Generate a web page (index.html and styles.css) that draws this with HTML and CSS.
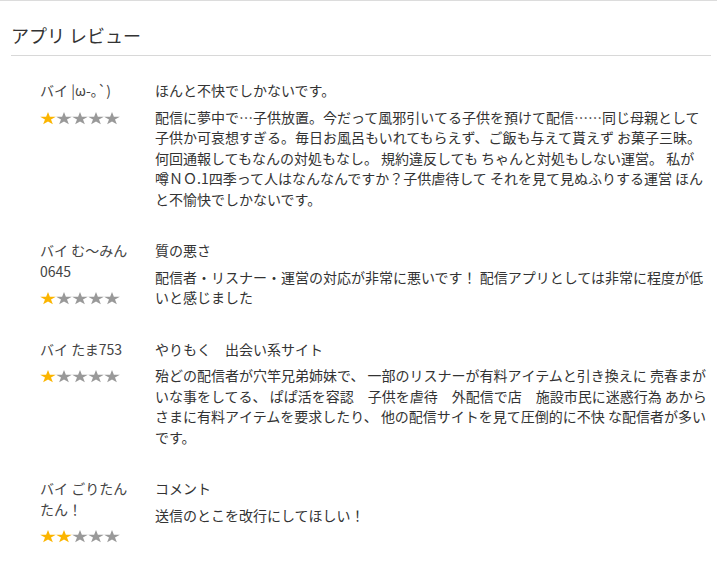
FILE: index.html
```html
<!DOCTYPE html>
<html lang="ja">
<head>
<meta charset="utf-8">
<title>アプリ レビュー</title>
<link rel="stylesheet" href="styles.css">
</head>
<body>
<svg width="0" height="0" class="defs">
  <defs>
    <path id="star" d="M12 0.2L14.79 8.77L23.8 8.8L16.5 14.07L19.3 22.6L12 17.34L4.7 22.6L7.49 14.07L0.2 8.8L9.21 8.77Z"/>
  </defs>
</svg>
<div class="page">
  <header class="page-header">
    <h2 class="page-title">アプリ レビュー</h2>
  </header>
  <div class="reviews">
    <div class="review">
      <div class="author">
        <div class="author-name">バイ |ω-｡`)</div>
        <div class="stars">
          <svg class="star on" viewBox="0 0 24 24" preserveAspectRatio="none"><use href="#star"/></svg>
          <svg class="star" viewBox="0 0 24 24" preserveAspectRatio="none"><use href="#star"/></svg>
          <svg class="star" viewBox="0 0 24 24" preserveAspectRatio="none"><use href="#star"/></svg>
          <svg class="star" viewBox="0 0 24 24" preserveAspectRatio="none"><use href="#star"/></svg>
          <svg class="star" viewBox="0 0 24 24" preserveAspectRatio="none"><use href="#star"/></svg>
        </div>
      </div>
      <div class="content">
        <div class="title">ほんと不快でしかないです。</div>
        <p class="body">配信に夢中で…子供放置。今だって風邪引いてる子供を預けて配信……同じ母親として子供か可哀想すぎる。毎日お風呂もいれてもらえず、ご飯も与えて貰えず お菓子三昧。何回通報してもなんの対処もなし。 規約違反しても ちゃんと対処もしない運営。 私が<span class="nowrap">噂ＮＯ.1四季</span>って人はなんなんですか？子供虐待して それを見て見ぬふりする運営 ほんと不愉快でしかないです。</p>
      </div>
    </div>
    <div class="review">
      <div class="author">
        <div class="author-name">バイ む〜みん0645</div>
        <div class="stars">
          <svg class="star on" viewBox="0 0 24 24" preserveAspectRatio="none"><use href="#star"/></svg>
          <svg class="star" viewBox="0 0 24 24" preserveAspectRatio="none"><use href="#star"/></svg>
          <svg class="star" viewBox="0 0 24 24" preserveAspectRatio="none"><use href="#star"/></svg>
          <svg class="star" viewBox="0 0 24 24" preserveAspectRatio="none"><use href="#star"/></svg>
          <svg class="star" viewBox="0 0 24 24" preserveAspectRatio="none"><use href="#star"/></svg>
        </div>
      </div>
      <div class="content">
        <div class="title">質の悪さ</div>
        <p class="body">配信者・リスナー・運営の対応が非常に悪いです！ 配信アプリとしては非常に程度が低いと感じました</p>
      </div>
    </div>
    <div class="review">
      <div class="author">
        <div class="author-name">バイ たま753</div>
        <div class="stars">
          <svg class="star on" viewBox="0 0 24 24" preserveAspectRatio="none"><use href="#star"/></svg>
          <svg class="star" viewBox="0 0 24 24" preserveAspectRatio="none"><use href="#star"/></svg>
          <svg class="star" viewBox="0 0 24 24" preserveAspectRatio="none"><use href="#star"/></svg>
          <svg class="star" viewBox="0 0 24 24" preserveAspectRatio="none"><use href="#star"/></svg>
          <svg class="star" viewBox="0 0 24 24" preserveAspectRatio="none"><use href="#star"/></svg>
        </div>
      </div>
      <div class="content">
        <div class="title">やりもく　出会い系サイト</div>
        <p class="body">殆どの配信者が穴竿兄弟姉妹で、 一部のリスナーが有料アイテムと引き換えに 売春まがいな事をしてる、 ぱぱ活を容認　子供を虐待　外配信で店　施設市民に迷惑行為 あからさまに有料アイテムを要求したり、 他の配信サイトを見て圧倒的に不快 な配信者が多いです。</p>
      </div>
    </div>
    <div class="review">
      <div class="author">
        <div class="author-name">バイ ごりたんたん！</div>
        <div class="stars">
          <svg class="star on" viewBox="0 0 24 24" preserveAspectRatio="none"><use href="#star"/></svg>
          <svg class="star on" viewBox="0 0 24 24" preserveAspectRatio="none"><use href="#star"/></svg>
          <svg class="star" viewBox="0 0 24 24" preserveAspectRatio="none"><use href="#star"/></svg>
          <svg class="star" viewBox="0 0 24 24" preserveAspectRatio="none"><use href="#star"/></svg>
          <svg class="star" viewBox="0 0 24 24" preserveAspectRatio="none"><use href="#star"/></svg>
        </div>
      </div>
      <div class="content">
        <div class="title">コメント</div>
        <p class="body">送信のとこを改行にしてほしい！</p>
      </div>
    </div>
  </div>
</div>
</body>
</html>
```

FILE: styles.css
```css
html, body {
  margin: 0;
  padding: 0;
  background: #fff;
}
body {
  border-top: 1px solid #dcdcdc;
  font-family: "Noto Sans CJK JP", "Noto Sans", sans-serif;
  color: #333;
  font-size: 14px;
  line-height: 20.5px;
}
.defs {
  position: absolute;
  width: 0;
  height: 0;
  overflow: hidden;
}
.page {
  margin: 0 6px 0 11px;
}
.page-header {
  padding: 20px 0 6px;
  border-bottom: 1px solid #d8d8d8;
}
.page-title {
  margin: 0;
  font-size: 18px;
  line-height: 28px;
  font-weight: normal;
  color: #333;
}
.reviews {
  padding-top: 24px;
}
.review {
  display: flex;
  padding: 0 2px 0 29px;
  margin-bottom: 31px;
}
.author {
  width: 100px;
  flex: none;
  margin-right: 15px;
}
.author-name {
  color: #444;
}
.stars {
  display: flex;
  margin-top: 11px;
  height: 13px;
}
.star {
  width: 16px;
  height: 13px;
  fill: #999;
  display: block;
}
.star.on {
  fill: #fbb500;
}
.content {
  flex: 1;
  min-width: 0;
}
.title {
  margin-bottom: 6px;
}
.body {
  margin: 0;
}
.nowrap {
  white-space: nowrap;
}
```
